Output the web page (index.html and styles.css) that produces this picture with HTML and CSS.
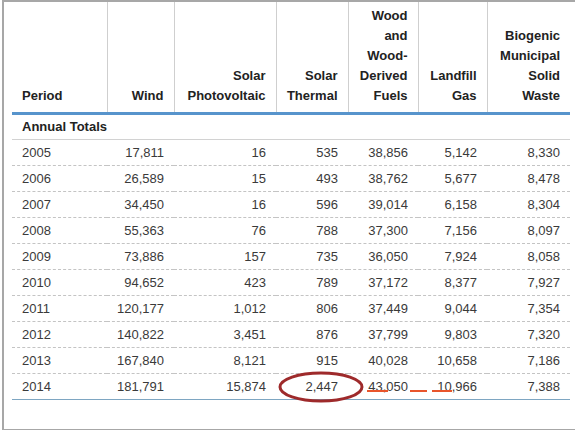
FILE: index.html
```html
<!DOCTYPE html>
<html>
<head>
<meta charset="utf-8">
<link rel="stylesheet" href="styles.css">
</head>
<body>
<div class="frame">
  <table class="grid">
    <colgroup>
      <col class="c-period"><col class="c-wind"><col class="c-pv"><col class="c-th"><col class="c-wood"><col class="c-land"><col class="c-bio">
    </colgroup>
    <thead>
      <tr>
        <th class="left">Period</th>
        <th>Wind</th>
        <th>Solar<br>Photovoltaic</th>
        <th>Solar<br>Thermal</th>
        <th>Wood<br>and<br>Wood-<br>Derived<br>Fuels</th>
        <th>Landfill<br>Gas</th>
        <th>Biogenic<br>Municipal<br>Solid<br>Waste</th>
      </tr>
    </thead>
    <tbody>
      <tr class="group"><td colspan="7">Annual Totals</td></tr>
      <tr><td class="left">2005</td><td>17,811</td><td>16</td><td>535</td><td>38,856</td><td>5,142</td><td>8,330</td></tr>
      <tr><td class="left">2006</td><td>26,589</td><td>15</td><td>493</td><td>38,762</td><td>5,677</td><td>8,478</td></tr>
      <tr><td class="left">2007</td><td>34,450</td><td>16</td><td>596</td><td>39,014</td><td>6,158</td><td>8,304</td></tr>
      <tr><td class="left">2008</td><td>55,363</td><td>76</td><td>788</td><td>37,300</td><td>7,156</td><td>8,097</td></tr>
      <tr><td class="left">2009</td><td>73,886</td><td>157</td><td>735</td><td>36,050</td><td>7,924</td><td>8,058</td></tr>
      <tr><td class="left">2010</td><td>94,652</td><td>423</td><td>789</td><td>37,172</td><td>8,377</td><td>7,927</td></tr>
      <tr><td class="left">2011</td><td>120,177</td><td>1,012</td><td>806</td><td>37,449</td><td>9,044</td><td>7,354</td></tr>
      <tr><td class="left">2012</td><td>140,822</td><td>3,451</td><td>876</td><td>37,799</td><td>9,803</td><td>7,320</td></tr>
      <tr><td class="left">2013</td><td>167,840</td><td>8,121</td><td>915</td><td>40,028</td><td>10,658</td><td>7,186</td></tr>
      <tr class="last"><td class="left">2014</td><td>181,791</td><td>15,874</td><td>2,447</td><td>43,050</td><td>10,966</td><td>7,388</td></tr>
    </tbody>
  </table>
  <svg class="ring" width="90" height="34" viewBox="0 0 90 34">
    <ellipse cx="45" cy="17" rx="41" ry="14" fill="none" stroke="#9e2a2b" stroke-width="3"/>
  </svg>
  <svg class="marks" width="90" height="4" viewBox="0 0 90 4">
    <line x1="0" y1="2" x2="21" y2="2" stroke="#e8552c" stroke-width="2"/>
    <line x1="43" y1="2" x2="60" y2="2" stroke="#e8552c" stroke-width="2"/>
    <line x1="65" y1="2" x2="85" y2="2" stroke="#e8552c" stroke-width="2"/>
  </svg>
</div>
</body>
</html>
```

FILE: styles.css
```css
html, body {
  margin: 0;
  padding: 0;
  background: #ffffff;
}

.frame {
  position: relative;
  margin-left: 2px;
  width: 568px;
  height: 427px;
  border: 2px solid #a7a7a7;
  padding: 0 0 0 8px;
  box-sizing: content-box;
  font-family: "Liberation Sans", Arial, sans-serif;
  font-size: 13px;
}

.grid {
  border-collapse: collapse;
  table-layout: fixed;
  width: 558px;
}

.c-period { width: 95px; }
.c-wind { width: 67px; }
.c-pv { width: 102px; }
.c-th { width: 72px; }
.c-wood { width: 70px; }
.c-land { width: 69px; }
.c-bio { width: 83px; }

.grid th {
  color: #222222;
  font-weight: bold;
  text-align: right;
  vertical-align: bottom;
  line-height: 20px;
  padding: 4px 10px 6px 10px;
  border-left: 1px solid #cfcfcf;
  border-bottom: 3px solid #5794cc;
}

.grid th:first-child {
  border-left: none;
}

.grid th.left,
.grid td.left {
  text-align: left;
}

.grid td {
  color: #3a3a3a;
  text-align: right;
  height: 25px;
  padding: 0 10px;
  line-height: 16px;
  border-bottom: 1px dashed #c4c4c4;
  white-space: nowrap;
}

.grid tr.group td {
  text-align: left;
  font-weight: bold;
  color: #222222;
  height: 24px;
  border-bottom: 1px solid #d2d2d2;
}

.grid tr.last td {
  border-bottom: 1px solid #7ea6c2;
}

.ring {
  position: absolute;
  left: 272px;
  top: 368px;
}

.marks {
  position: absolute;
  left: 363px;
  top: 387px;
}
```
